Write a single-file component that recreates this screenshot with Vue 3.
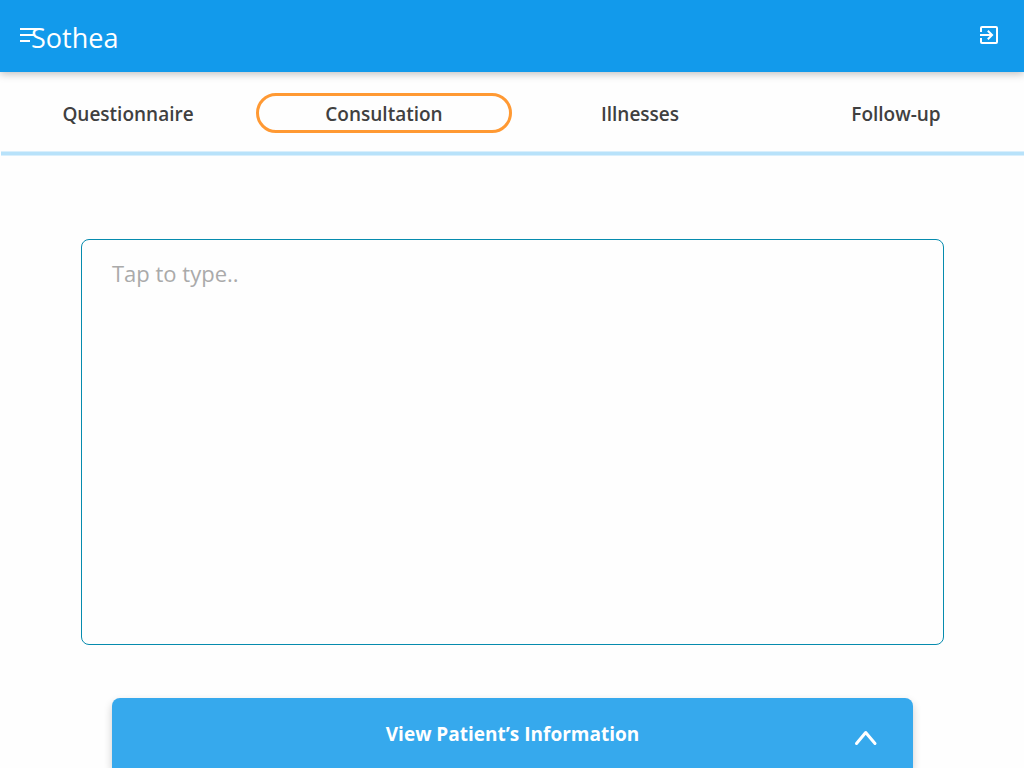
<script setup>
import { ref } from 'vue'

const tabs = ['Questionnaire', 'Consultation', 'Illnesses', 'Follow-up']
const active = ref('Consultation')
const notes = ref('')
</script>

<template>
  <div class="screen">
    <header class="bar">
      <button class="icon-button" type="button" aria-label="Menu">
        <svg width="18" height="14" viewBox="0 0 18 14" fill="#fff">
          <path d="M0 0h18v2H0zM0 6h15v2H0zM0 12h10v2H0z" />
        </svg>
      </button>
      <h1 class="title">Sothea</h1>
      <button class="icon-button exit" type="button" aria-label="Log out">
        <svg width="24" height="24" viewBox="0 0 24 24" fill="#fff">
          <path d="M10.09 15.59 11.5 17l5-5-5-5-1.41 1.41L12.67 11H3v2h9.67zM19 3H5a2 2 0 0 0-2 2v4h2V5h14v14H5v-4H3v4a2 2 0 0 0 2 2h14a2 2 0 0 0 2-2V5a2 2 0 0 0-2-2z" />
        </svg>
      </button>
    </header>

    <nav class="tabs">
      <button
        v-for="tab in tabs"
        :key="tab"
        type="button"
        class="tab"
        :class="{ active: tab === active }"
        @click="active = tab"
      >{{ tab }}</button>
    </nav>
    <div class="divider"></div>

    <main class="content">
      <textarea v-model="notes" class="notes" aria-label="Consultation notes" placeholder="Tap to type.."></textarea>
      <button class="patient" type="button">
        <span class="patient-label">View Patient’s Information</span>
        <svg class="chevron" width="24" height="16" viewBox="0 0 24 16" fill="none" stroke="#fff" stroke-width="3" stroke-linecap="round" stroke-linejoin="round">
          <path d="M2.5 13.5 11.7 2.5 21 13.5" />
        </svg>
      </button>
    </main>
  </div>
</template>

<style>
body {
  margin: 0;
  background: #fefefe;
}
</style>

<style scoped>
.screen {
  display: flex;
  flex-direction: column;
  height: 100vh;
  overflow: hidden;
  font-family: "Segoe UI", "Open Sans", sans-serif;
}

.bar {
  display: flex;
  align-items: center;
  flex: none;
  height: 72px;
  padding: 0 23px 2px 20px;
  box-sizing: border-box;
  background: #129aeb;
  box-shadow: 0 2px 8px rgba(0, 0, 0, 0.25);
}

.icon-button {
  display: flex;
  padding: 0;
  border: 0;
  background: none;
  cursor: pointer;
}

.exit {
  margin-left: auto;
}

.title {
  margin: 6px 0 0 -7px;
  color: #fff;
  font-size: 27px;
  font-weight: 400;
  line-height: 36px;
}

.tabs {
  display: grid;
  grid-template-columns: repeat(4, 1fr);
  flex: none;
  padding: 21px 0 18px;
}

.divider {
  flex: none;
  height: 3px;
  margin: 0 0 0 1px;
  border: solid #d9effc;
  border-width: 1px 0;
  background: #b8e2fa;
}

.tab {
  height: 40px;
  padding: 2px 0 0;
  border: 3px solid transparent;
  border-radius: 20px;
  background: none;
  color: #404040;
  font-family: inherit;
  font-size: 19px;
  font-weight: 600;
  line-height: 32px;
  cursor: pointer;
}

.tab.active {
  border-color: #ff9933;
}

.content {
  display: flex;
  flex-direction: column;
  flex: 1;
  min-height: 0;
  padding: 83px 80px 0 81px;
}

.notes {
  display: block;
  flex: 1;
  min-height: 0;
  box-sizing: border-box;
  padding: 17px 30px;
  border: 1px solid #068bae;
  border-radius: 8px;
  outline: 0;
  resize: none;
  background: transparent;
  color: #404040;
  font-family: inherit;
  font-size: 22px;
  line-height: 32px;
}

.notes::placeholder {
  color: #aaa;
  opacity: 1;
}

.patient {
  display: grid;
  grid-template-columns: 1fr auto 1fr;
  align-items: center;
  flex: none;
  height: 70px;
  margin: 53px 31px 0;
  padding: 2px 35px 0;
  border: 0;
  border-radius: 8px 8px 0 0;
  background: #36a9ed;
  box-shadow: 0 4px 8px rgba(0, 0, 0, 0.2);
  color: #fff;
  font-family: "Open Sans", sans-serif;
  font-size: 19px;
  font-weight: 700;
  cursor: pointer;
}

.patient-label {
  grid-column: 2;
}

.chevron {
  justify-self: end;
  margin-top: 8px;
}
</style>
